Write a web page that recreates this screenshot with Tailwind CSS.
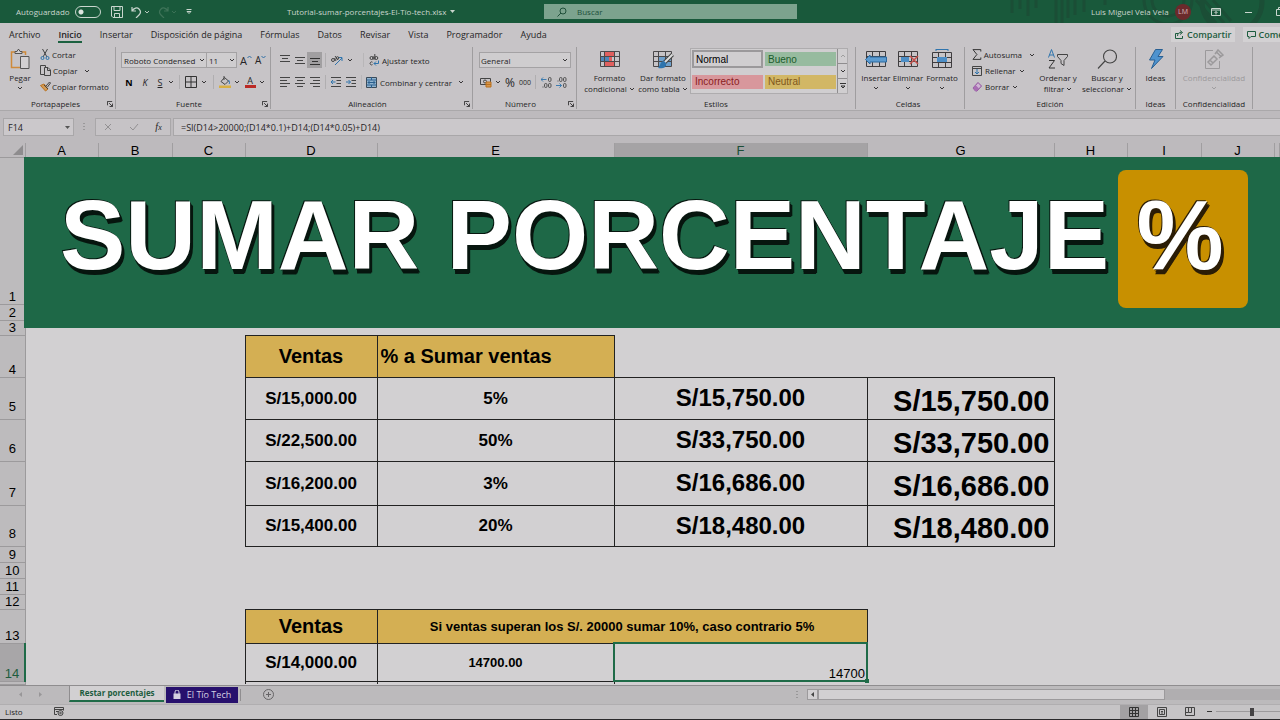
<!DOCTYPE html>
<html lang="es">
<head>
<meta charset="utf-8">
<meta name="viewport" content="width=device-width, initial-scale=1">
<title>Tutorial-sumar-porcentajes-El-Tío-tech.xlsx</title>
<script src="https://cdn.jsdelivr.net/npm/@tailwindcss/browser@4"></script>
</head>
<body class="bg-[#2a292b] font-['Open_Sans','Noto_Sans',sans-serif] text-[8px] leading-[11px] text-[#262426]">
<svg class="hidden" aria-hidden="true">
  <symbol id="chev" viewBox="0 0 6 6"><path d="M1 2l2 2 2-2" fill="none" stroke="currentColor" stroke-width=".9"/></symbol>
  <symbol id="launch" viewBox="0 0 7 7"><path d="M.5 5V.5H6M2.500 2.500L6 6M6.500 3v3.500H3" fill="none" stroke="currentColor"/></symbol>
  <symbol id="cells" viewBox="0 0 22 18"><path d="M1.500 1.500h19v15h-19zM1.500 6.500h19M1.500 11.500h19M7.500 1.500v15M14.500 1.500v15" fill="none" stroke="#3f3d3f"/></symbol>
</svg>
<div class="flex min-h-screen flex-col overflow-hidden">

<!-- Title bar -->
<header class="relative flex h-[23px] shrink-0 items-center overflow-hidden bg-[#19593b] text-[#c9d6ce]">
  <svg class="absolute right-0 top-0 h-[23px] w-[280px]" viewBox="0 0 280 23" fill="none" stroke="#1b4e36" stroke-width="3" aria-hidden="true"><path d="M12 0v13M20 0v9M28 0v16M36 0v8M56 0v23M62 0v23M68 0v18M75 0v15M84 0v12M105 0v5"/><circle cx="168" cy="0" r="24"/><circle cx="168" cy="0" r="16"/><circle cx="232" cy="2" r="30" stroke-width="5"/><path d="M196 0l20 23M204 0l20 23M213 0l18 21"/></svg>
  <div class="relative flex w-[287px] shrink-0 items-center pl-4">
    <label for="auto" class="mr-[5px]">Autoguardado</label>
    <input id="auto" type="checkbox" role="switch" class="h-3 w-[26px] appearance-none rounded-full border border-[#c9d6ce] bg-[radial-gradient(circle_at_5px_5px,#dce5df_2px,transparent_3px)]">
    <button class="ml-[10px]" aria-label="Guardar"><svg class="size-3" viewBox="0 0 12 12" fill="none" stroke="currentColor"><path d="M.5.500h11v11H2L.5 10zM3 .5v4h6v-4M3.500 11.500V7.500h5v4"/></svg></button>
    <button class="ml-2 flex items-center gap-[2px]" aria-label="Deshacer"><svg class="h-3 w-[11px]" viewBox="0 0 11 12" fill="none" stroke="currentColor" stroke-width="1.200"><path d="M1 1v4h4M1 5c2-3 5-4 7-2s2 4 0 6l-3 3"/></svg><svg class="size-[6px]"><use href="#chev"/></svg></button>
    <button class="ml-2 flex items-center gap-[2px] text-[#3f7459]" aria-label="Rehacer" disabled><svg class="h-3 w-[11px]" viewBox="0 0 11 12" fill="none" stroke="currentColor" stroke-width="1.200"><path d="M10 1v4H6M10 5C8 2 5 1 3 3s-2 4 0 6l3 3"/></svg><svg class="size-[6px]"><use href="#chev"/></svg></button>
    <button class="ml-[9px]" aria-label="Personalizar"><svg class="size-[6px]" viewBox="0 0 6 6" fill="none" stroke="currentColor"><path d="M.5.500h5M1 2.500h4L3 4.500z"/></svg></button>
  </div>
  <button class="relative flex w-[257px] shrink-0 items-center gap-1 whitespace-nowrap">Tutorial-sumar-porcentajes-El-Tío-tech.xlsx<svg class="size-[5px]" viewBox="0 0 5 5"><path d="M0 1h5L2.500 4z" fill="currentColor"/></svg></button>
  <label class="relative flex h-[15px] w-[253px] items-center gap-[10px] bg-[#7ca38e] pl-[13px] text-[#20503a]">
    <svg class="size-[10px]" viewBox="0 0 10 10" fill="none" stroke="currentColor"><circle cx="6" cy="4" r="3"/><path d="M4 6L.5 9.500"/></svg>
    <input type="search" aria-label="Buscar" placeholder="Buscar" class="w-40 bg-transparent outline-none placeholder:text-[#20503a]">
  </label>
  <div class="relative ml-auto flex w-[189px] shrink-0 items-center overflow-hidden whitespace-nowrap">
    <span class="w-[84px] shrink-0">Luis Miguel Vela Vela</span>
    <button class="size-4 shrink-0 rounded-full bg-[#6b2a2c] text-[7px] leading-4 text-[#d9b9b9]">LM</button>
    <button class="ml-5 shrink-0" aria-label="Opciones de la cinta"><svg class="h-2 w-[10px]" viewBox="0 0 10 8" fill="none" stroke="currentColor"><path d="M.5.500h9v7h-9zM.5 2h9M5 6.500V3.500M3.500 5L5 3.500 6.500 5"/></svg></button>
    <button class="ml-6 shrink-0" aria-label="Minimizar"><svg class="h-2 w-[7px]" viewBox="0 0 7 8"><path d="M0 4.500h7" stroke="currentColor"/></svg></button>
    <button class="ml-6 shrink-0" aria-label="Restaurar"><svg class="size-[9px]" viewBox="0 0 9 9" fill="none" stroke="currentColor"><path d="M.5 2.500h6v6h-6zM2.500 2V.5h6v6H7"/></svg></button>
  </div>
</header>

<!-- Ribbon tabs -->
<nav class="flex h-[22px] shrink-0 items-center overflow-hidden bg-[#c7c4c7] text-[9px]">
  <div class="flex gap-[18px] whitespace-nowrap pl-[9px]">
    <a href="#">Archivo</a>
    <a href="#" class="-mb-[3px] border-b-2 border-[#1c6140] pb-px font-semibold">Inicio</a>
    <a href="#">Insertar</a><a href="#">Disposición de página</a><a href="#">Fórmulas</a><a href="#">Datos</a><a href="#">Revisar</a><a href="#">Vista</a><a href="#">Programador</a><a href="#">Ayuda</a>
  </div>
  <div class="ml-auto flex w-[109px] shrink-0 gap-2 overflow-hidden whitespace-nowrap font-semibold text-[#1d5c3e]">
    <button class="flex h-[15px] shrink-0 items-center gap-[3px] bg-[#d3d1d3] px-1"><svg class="size-[9px]" viewBox="0 0 9 9" fill="none" stroke="currentColor"><path d="M3 3.500H.5v5h7V6M2.500 6c0-3 2-3.500 4-3.500M5 .5l2.500 2L5 4.500"/></svg>Compartir</button>
    <button class="flex h-[15px] shrink-0 items-center gap-[2px] bg-[#d3d1d3] px-1"><svg class="size-[9px]" viewBox="0 0 9 9" fill="none" stroke="currentColor"><path d="M.5 1.500h8v5H4l-2 2v-2H.5z"/></svg>Comentarios</button>
  </div>
</nav>

<!-- Ribbon -->
<section class="flex h-[66px] shrink-0 overflow-hidden whitespace-nowrap border-b border-[#aaa8aa] bg-[#c7c4c7] *:mt-[2px] *:flex *:h-[62px] *:shrink-0 *:flex-col *:justify-between *:border-r *:border-[#9f9d9f]" aria-label="Inicio">
  <div class="w-[116px]">
    <div class="flex">
      <button class="flex w-10 flex-col items-center pt-[2px]"><svg class="h-5 w-[22px]" viewBox="0 0 22 20" fill="none"><path d="M6 3H2.500v15.500H11M13 3h3.500v3" stroke="#cf8a3a" stroke-width="1.500"/><path d="M6 4.500V2.500h2l1-2h1l1 2h2v2zM11.500 7.500h8.500v12h-8.500z" fill="#d3d1d3" stroke="#555"/></svg><span class="mt-[3px]">Pegar</span><svg class="mt-[2px] size-[6px]"><use href="#chev"/></svg></button>
      <div class="flex flex-col gap-[5px] pt-[2px]">
        <button class="flex items-center gap-[2px]"><svg class="h-[11px] w-[10px]" viewBox="0 0 10 11" fill="none" stroke="#444"><path d="M2.500 0L7 8M7.500 0L3 8"/><circle cx="2.500" cy="9" r="1.500" stroke="#2f74ad"/><circle cx="7.500" cy="9" r="1.500" stroke="#2f74ad"/></svg>Cortar</button>
        <button class="flex items-center gap-[2px]"><svg class="h-[11px] w-[11px]" viewBox="0 0 11 11" fill="none" stroke="#444"><path d="M4 9.500H.5v-9h5V2M4.500 2.500h3.500l2.500 2.500v5.500h-6zM7.500 3v2.500h3"/></svg>Copiar<svg class="ml-[5px] size-[6px]"><use href="#chev"/></svg></button>
        <button class="flex items-center gap-px"><svg class="h-[11px] w-[11px]" viewBox="0 0 11 11" fill="none"><path d="M.5 4.500l5 5.500 2.500-2-4-5z" fill="#d69a50" stroke="#b87324"/><path d="M4 4l4 4M6 5L9.500 1l1 1-3 4" stroke="#444"/></svg>Copiar formato</button>
      </div>
    </div>
    <div class="flex items-center pr-[2px]"><span class="flex-1 pr-3 text-center pl-4">Portapapeles</span><button aria-label="Más opciones de Portapapeles"><svg class="size-[6px]"><use href="#launch"/></svg></button></div>
  </div>

  <div class="w-[155px]">
    <div class="flex flex-col gap-[6px] pl-[5px] pt-[5px]">
      <div class="flex items-center">
        <label class="relative flex items-center"><select aria-label="Fuente" class="h-4 w-[86px] appearance-none border border-[#a4a2a4] bg-[#cfcdcf] pl-[2px] leading-[13px]"><option>Roboto Condensed</option></select><svg class="pointer-events-none absolute right-[2px] size-[6px]"><use href="#chev"/></svg></label>
        <label class="relative -ml-px flex items-center"><select aria-label="Tamaño" class="h-4 w-[31px] appearance-none border border-[#a4a2a4] bg-[#cfcdcf] pl-[2px] leading-[13px]"><option>11</option></select><svg class="pointer-events-none absolute right-[2px] size-[6px]"><use href="#chev"/></svg></label>
        <button class="ml-[3px] flex text-[11px]" aria-label="Aumentar tamaño">A<svg class="size-[5px]" viewBox="0 0 5 5"><path d="M.5 3l2-2 2 2" fill="none" stroke="#2f6fa5"/></svg></button>
        <button class="ml-[3px] flex text-[10px]" aria-label="Reducir tamaño">A<svg class="size-[5px]" viewBox="0 0 5 5"><path d="M.5 1l2 2 2-2" fill="none" stroke="#2f6fa5"/></svg></button>
      </div>
      <div class="flex h-4 items-center text-[9px]">
        <button class="w-4 font-bold text-black">N</button><button class="w-4 italic">K</button><button class="w-[14px] underline">S</button><svg class="ml-[1px] size-[6px]"><use href="#chev"/></svg>
        <span class="ml-[5px] h-[14px] w-px bg-[#b0aeb0]"></span>
        <button class="ml-[5px]" aria-label="Bordes"><svg class="size-3" viewBox="0 0 12 12" fill="none" stroke="#333"><path d="M.5.500h11v11H.5zM6 .5v11M.5 6h11"/></svg></button><svg class="ml-1 size-[6px]"><use href="#chev"/></svg>
        <span class="ml-[6px] h-[14px] w-px bg-[#b0aeb0]"></span>
        <button class="ml-[5px]" aria-label="Color de relleno"><svg class="h-3 w-3" viewBox="0 0 12 12" fill="none"><path d="M2 5.500l3.500-4 4 3.500-3.500 3.500zM5 0v4" stroke="#444"/><path d="M9.500 4c1 1.500 1.500 3 .5 4" stroke="#2f74ad"/><path d="M0 9.500h12V12H0z" fill="#d8b043"/></svg></button><svg class="ml-[3px] size-[6px]"><use href="#chev"/></svg>
        <button class="ml-1 flex w-3 flex-col items-center text-[9px] leading-[9px]" aria-label="Color de fuente">A<span class="h-[3px] w-[11px] bg-[#bb2a25]"></span></button><svg class="ml-[3px] size-[6px]"><use href="#chev"/></svg>
      </div>
    </div>
    <div class="flex items-center pr-[2px]"><span class="flex-1 text-center">Fuente</span><button aria-label="Más opciones de Fuente"><svg class="size-[6px]"><use href="#launch"/></svg></button></div>
  </div>

  <div class="w-[202px]">
    <div class="flex flex-col gap-[6px] pl-[6px] pt-[5px]">
      <div class="flex h-4 items-center">
        <button class="flex w-4 justify-center" aria-label="Alinear arriba"><svg class="size-[10px]" viewBox="0 0 10 10" stroke="#444"><path d="M0 .5h10M2 3.500h6M0 6.500h10"/></svg></button>
        <button class="flex w-[14px] justify-center" aria-label="Alinear en medio"><svg class="size-[10px]" viewBox="0 0 10 10" stroke="#444"><path d="M0 2.500h10M2 5.500h6M0 8.500h10"/></svg></button>
        <button class="flex h-4 w-[15px] items-center justify-center bg-[#a19fa1]" aria-label="Alinear abajo"><svg class="size-[10px]" viewBox="0 0 10 10" stroke="#333"><path d="M0 3.500h10M2 6.500h6M0 9.500h10"/></svg></button>
        <span class="ml-[3px] h-[14px] w-px bg-[#b0aeb0]"></span>
        <button class="ml-[5px] flex items-center gap-[4px]" aria-label="Orientación"><svg class="h-[11px] w-3" viewBox="0 0 12 11" fill="none"><path d="M4 10l7-7M7.500 2.500H11V6" stroke="#2f74ad"/><circle cx="2" cy="5" r="1.500" stroke="#444"/><path d="M3.500 3l1.500 3M4 1l3 4" stroke="#444"/><circle cx="6.500" cy="3" r="1.300" stroke="#444"/></svg><svg class="size-[6px]"><use href="#chev"/></svg></button>
        <span class="ml-[10px] h-[14px] w-px bg-[#b8b6b8]"></span>
        <button class="ml-[5px] flex items-center gap-[3px]"><svg class="h-3 w-[10px]" viewBox="0 0 10 12" fill="none"><g stroke="#333" stroke-width=".9"><circle cx="2.500" cy="4" r="1.500"/><path d="M4.200 2.200v3.500M5.800 0v5.700"/><circle cx="7.300" cy="4" r="1.500"/><path d="M3.500 8.200a1.500 1.500 0 100 2.400"/></g><path d="M9.500 6.500v3H5M7 7.500l-2 2 2 2" stroke="#2f74ad"/></svg>Ajustar texto</button>
      </div>
      <div class="flex h-4 items-center">
        <button class="flex w-4 justify-center" aria-label="Alinear a la izquierda"><svg class="size-[10px]" viewBox="0 0 10 10" stroke="#444"><path d="M0 .5h10M0 3.500h7M0 6.500h10M0 9.500h7"/></svg></button>
        <button class="flex w-[14px] justify-center" aria-label="Centrar"><svg class="size-[10px]" viewBox="0 0 10 10" stroke="#444"><path d="M0 .5h10M2 3.500h6M0 6.500h10M2 9.500h6"/></svg></button>
        <button class="flex w-[15px] justify-center" aria-label="Alinear a la derecha"><svg class="size-[10px]" viewBox="0 0 10 10" stroke="#444"><path d="M0 .5h10M3 3.500h7M0 6.500h10M3 9.500h7"/></svg></button>
        <span class="ml-[3px] h-[14px] w-px bg-[#b0aeb0]"></span>
        <button class="ml-[5px]" aria-label="Disminuir sangría"><svg class="size-[10px]" viewBox="0 0 10 10" fill="none" stroke="#444"><path d="M0 .5h10M5.500 3.500H10M5.500 6.500H10M0 9.500h10"/><path d="M4.500 5H0M2 3L0 5l2 2" stroke="#2f74ad"/></svg></button>
        <button class="ml-[5px]" aria-label="Aumentar sangría"><svg class="size-[10px]" viewBox="0 0 10 10" fill="none" stroke="#444"><path d="M0 .5h10M5.500 3.500H10M5.500 6.500H10M0 9.500h10"/><path d="M0 5h4.500M2.500 3l2 2-2 2" stroke="#2f74ad"/></svg></button>
        <span class="ml-[5px] h-[14px] w-px bg-[#b8b6b8]"></span>
        <button class="ml-[4px] flex items-center gap-[3px]"><svg class="h-[11px] w-[11px]" viewBox="0 0 11 11" fill="none"><path d="M.5.500h10v10H.5z" fill="#90b4d0" stroke="#3b4a58"/><path d="M.5 3h10M.5 8h10M5.500 0v3M5.500 8v3M2 5.500h7M3.500 4L2 5.500 3.500 7M7.500 4L9 5.500 7.500 7" stroke="#2a5f8e"/></svg>Combinar y centrar</button><svg class="ml-[6px] size-[6px]"><use href="#chev"/></svg>
      </div>
    </div>
    <div class="flex items-center pr-[2px]"><span class="flex-1 text-center">Alineación</span><button aria-label="Más opciones de Alineación"><svg class="size-[6px]"><use href="#launch"/></svg></button></div>
  </div>

  <div class="w-[104px]">
    <div class="flex flex-col gap-[6px] pl-[6px] pt-[5px]">
      <label class="relative flex items-center"><select aria-label="Formato de número" class="h-4 w-[92px] appearance-none border border-[#a4a2a4] bg-[#cfcdcf] pl-[1px] leading-[13px]"><option>General</option></select><svg class="pointer-events-none absolute right-[8px] size-[6px]"><use href="#chev"/></svg></label>
      <div class="flex h-4 items-center">
        <button class="ml-px" aria-label="Formato contabilidad"><svg class="h-[11px] w-3" viewBox="0 0 12 11" fill="none"><path d="M.5 1.500h10v6H.5z" stroke="#444"/><circle cx="5" cy="4.500" r="1.500" stroke="#444"/><path d="M6 5h5v5H6zM6 7.500h5" fill="#d8964a" stroke="#b9701f"/></svg></button><svg class="ml-[3px] size-[6px]"><use href="#chev"/></svg>
        <button class="ml-1 text-[12px]">%</button><button class="ml-1 text-[7px]">000</button>
        <span class="ml-[4px] h-[14px] w-px bg-[#b0aeb0]"></span>
        <button class="ml-[5px]" aria-label="Aumentar decimales"><svg class="size-[11px]" viewBox="0 0 11 11" fill="none" stroke="#444" stroke-width=".9"><rect x="7.500" y=".5" width="2.500" height="4" rx="1.200"/><rect x="3.500" y="6.500" width="2.500" height="4" rx="1.200"/><rect x="7.500" y="6.500" width="2.500" height="4" rx="1.200"/><path d="M1.500 10h1"/><path d="M5.500 2.500H0M2 .5L0 2.500l2 2" stroke="#2f74ad"/></svg></button>
        <button class="ml-[4px]" aria-label="Disminuir decimales"><svg class="size-[11px]" viewBox="0 0 11 11" fill="none" stroke="#444" stroke-width=".9"><rect x="3.500" y=".5" width="2.500" height="4" rx="1.200"/><rect x="7.500" y=".5" width="2.500" height="4" rx="1.200"/><rect x="7.500" y="6.500" width="2.500" height="4" rx="1.200"/><path d="M1.500 4h1"/><path d="M0 8.500h5.500M3.500 6.500l2 2-2 2" stroke="#2f74ad"/></svg></button>
      </div>
    </div>
    <div class="flex items-center pr-[2px]"><span class="flex-1 text-center">Número</span><button aria-label="Más opciones de Número"><svg class="size-[6px]"><use href="#launch"/></svg></button></div>
  </div>

  <div class="w-[279px]">
    <div class="flex">
      <button class="ml-[6px] flex w-[53px] flex-col items-center pt-[2px]"><svg class="h-5 w-5" viewBox="0 0 20 20" fill="none"><path d="M5 2h9v5H5z" fill="#e0605f"/><path d="M5 12h9v5H5z" fill="#e0605f"/><path d="M1 7h8v5H1z" fill="#4d86b8"/><path d="M9 7h3v5H9z" fill="#e0605f"/><path d="M.5 2.500h19v15H.5zM.5 7.500h19M.5 12.500h19M4.500 2.500v15M14.500 2.500v15" stroke="#4b494b"/></svg><span class="mt-[3px]">Formato</span><span class="flex items-center gap-[2px]">condicional<svg class="size-[6px]"><use href="#chev"/></svg></span></button>
      <button class="flex w-[54px] flex-col items-center pt-[2px]"><svg class="h-5 w-[22px]" viewBox="0 0 22 20" fill="none"><path d="M6 7h13v10H6z" fill="#6fa0cb"/><path d="M1.500 2.500h18v15h-18zM1.500 7.500h18M1.500 12.500h18M6.500 2.500v15M13.500 2.500v15" stroke="#4b494b"/><path d="M20.500 5.500L12 14" stroke="#444" stroke-width="4"/><path d="M20.500 5.500L12 14" stroke="#ddd" stroke-width="2"/><path d="M12 12c-4 0-3 4-6 7 4 1 9 0 8-5z" fill="#2f74ad"/></svg><span class="mt-[3px]">Dar formato</span><span class="flex items-center gap-[2px]">como tabla<svg class="size-[6px]"><use href="#chev"/></svg></span></button>
      <div class="mt-[1px] flex border border-[#aeacae] bg-[#d0ced0] font-['Liberation_Sans',sans-serif] text-[10px]">
        <div class="grid grid-cols-2 gap-x-[2px] gap-y-[3px] p-px *:h-[18px] *:w-[71px] *:pl-[3px] *:text-left">
          <button class="border-2 border-[#9b999b] pl-[2px]! text-black">Normal</button>
          <button class="border-y-2 border-[#d0ced0] bg-[#97bb9f] text-[#1b5c2c]">Bueno</button>
          <button class="border-y-2 border-[#d0ced0] bg-[#d8979c] text-[#8b1c22]">Incorrecto</button>
          <button class="border-y-2 border-[#d0ced0] bg-[#d2b765] text-[#80561a]">Neutral</button>
        </div>
        <div class="flex w-[10px] flex-col divide-y divide-[#8f8d8f] border-l border-[#8f8d8f] *:flex *:flex-1 *:items-center *:justify-center">
          <button aria-label="Anterior" class="text-[#999]"><svg class="size-[6px] rotate-180"><use href="#chev"/></svg></button>
          <button aria-label="Siguiente"><svg class="size-[6px]"><use href="#chev"/></svg></button>
          <button aria-label="Más estilos"><svg class="size-[6px]" viewBox="0 0 6 6" fill="none" stroke="#333"><path d="M0 .5h6M1 3l2 2 2-2z"/></svg></button>
        </div>
      </div>
    </div>
    <span class="text-center">Estilos</span>
  </div>

  <div class="w-[109px]">
    <div class="flex pl-[4px] *:flex *:flex-col *:items-center *:pt-[2px]">
      <button class="w-8"><svg class="h-5 w-[22px]" viewBox="0 0 22 20"><use href="#cells" y="1" width="22" height="18"/><path d="M5 8h16.500v5H5v2L.5 10.500 5 6z" fill="#5c9bd0" stroke="#2a689f"/></svg><span class="mt-[3px]">Insertar</span><svg class="mt-[2px] size-[6px]"><use href="#chev"/></svg></button>
      <button class="w-8"><svg class="h-5 w-[22px]" viewBox="0 0 22 20"><use href="#cells" y="1" width="22" height="18"/><path d="M4 8h8v5H4z" fill="#4d8ec6"/><path d="M13 7l8 8M21 7l-8 8" stroke="#c8504b" stroke-width="1.500"/></svg><span class="mt-[3px]">Eliminar</span><svg class="mt-[2px] size-[6px]"><use href="#chev"/></svg></button>
      <button class="w-[36px]"><svg class="h-5 w-[22px]" viewBox="0 0 22 20"><use href="#cells" y="2" width="22" height="18"/><path d="M6 8h10v5H6z" fill="#4d8ec6"/><path d="M5 .5h12M5 0v2M17 0v2" stroke="#2f74ad"/></svg><span class="mt-[3px]">Formato</span><svg class="mt-[2px] size-[6px]"><use href="#chev"/></svg></button>
    </div>
    <span class="pr-1 text-center">Celdas</span>
  </div>

  <div class="w-[171px]">
    <div class="flex">
      <div class="flex w-[70px] flex-col gap-[5px] pl-[7px] pt-[2px]">
        <button class="flex items-center gap-[2px]"><svg class="h-[11px] w-[10px]" viewBox="0 0 10 11" fill="none" stroke="#333"><path d="M9 2.500V.5H1l4 5-4 5h8v-2"/></svg>Autosuma<svg class="ml-[5px] size-[6px] shrink-0"><use href="#chev"/></svg></button>
        <button class="flex items-center gap-[3px]"><svg class="h-[10px] w-[10px]" viewBox="0 0 10 10" fill="none"><path d="M.5.500h9v9h-9zM.5 2.500h9" stroke="#444"/><path d="M5 3v5M3 6l2 2 2-2" stroke="#2f74ad"/></svg>Rellenar<svg class="size-[6px]"><use href="#chev"/></svg></button>
        <button class="flex items-center gap-[3px]"><svg class="h-[10px] w-[10px]" viewBox="0 0 10 10"><path d="M1 6l5-5.500 3.500 3.500L5 9H3.500z" fill="#d0b6d5" stroke="#8e4a9b"/><path d="M1 6l2.500-3L7 6.500 5 9H3.500z" fill="#a86fb3"/></svg>Borrar<svg class="size-[6px]"><use href="#chev"/></svg></button>
      </div>
      <button class="flex w-[46px] flex-col items-center pt-[2px]"><svg class="h-5 w-5" viewBox="0 0 20 20" fill="none"><path d="M.5 8.500L3.500.5l3 8M1.500 6h4" stroke="#2f74ad"/><path d="M1 11.500h5.500L1 19h6" stroke="#333"/><path d="M9.500 5.500h10v2L16 11.500v5l-3-2v-3L9.500 7.500z" stroke="#444"/></svg><span class="mt-[3px]">Ordenar y</span><span class="flex items-center gap-[2px]">filtrar<svg class="size-[6px]"><use href="#chev"/></svg></span></button>
      <button class="flex w-[52px] flex-col items-center pt-[2px]"><svg class="h-5 w-5" viewBox="0 0 20 20" fill="none" stroke="#444" stroke-width="1.100"><circle cx="13" cy="7.500" r="6.500"/><path d="M8 12l-7 7.500"/></svg><span class="mt-[3px]">Buscar y</span><span class="flex items-center gap-[2px]">seleccionar<svg class="size-[6px]"><use href="#chev"/></svg></span></button>
    </div>
    <span class="text-center">Edición</span>
  </div>

  <div class="w-10">
    <button class="flex flex-col items-center pt-[2px]"><svg class="h-5 w-4" viewBox="0 0 16 20"><path d="M7.500.500h7L10 7.500h5L3.500 19.500 7 11H1.500z" fill="#4f93cf" stroke="#285f92"/></svg><span class="mt-[3px]">Ideas</span></button>
    <span class="text-center">Ideas</span>
  </div>

  <div class="w-[77px]">
    <button disabled class="flex flex-col items-center pt-[2px] text-[#9b999b]"><svg class="h-5 w-5" viewBox="0 0 20 20" fill="none" stroke="currentColor"><path d="M9 1.500H1.500v18h14V12"/><path d="M4 13l6-6 3 3-6 6zM11 5l3-4 5 5-4 3M12 2.500l5 5M6 11l3 3" stroke-width="1.500"/></svg><span class="mt-[3px]">Confidencialidad</span><svg class="mt-[2px] size-[6px]"><use href="#chev"/></svg></button>
    <span class="text-center">Confidencialidad</span>
  </div>
</section>

<!-- Formula bar -->
<div class="flex h-8 shrink-0 items-center bg-[#bdbabd] pl-[3px]">
  <label class="relative flex items-center"><input aria-label="Cuadro de nombres" value="F14" class="h-[18px] w-[71px] border border-[#a9a7a9] bg-[#cbc8cb] pl-1 text-[9px]"><svg class="absolute right-[4px] size-[5px]" viewBox="0 0 5 5"><path d="M0 1h5L2.500 4z" fill="#555"/></svg></label>
  <svg class="ml-2 h-2 w-1" viewBox="0 0 4 8"><path d="M2 0v8" stroke="#777" stroke-dasharray="1 2"/></svg>
  <div class="ml-[9px] flex h-[18px] w-[76px] shrink-0 items-center justify-around border border-[#a9a7a9] bg-[#c6c3c6] text-[#929092]">
    <button aria-label="Cancelar"><svg class="size-[8px]" viewBox="0 0 8 8"><path d="M1 1l6 6M7 1L1 7" stroke="currentColor"/></svg></button>
    <button aria-label="Introducir"><svg class="h-2 w-[10px]" viewBox="0 0 10 8"><path d="M1 4l3 3 5-6" fill="none" stroke="currentColor"/></svg></button>
    <button class="font-['Liberation_Serif',serif] text-[10px] italic text-[#222]">f<span class="text-[8px]">x</span></button>
  </div>
  <input aria-label="Barra de fórmulas" value="=SI(D14>20000;(D14*0.1)+D14;(D14*0.05)+D14)" class="ml-[2px] h-[18px] min-w-0 flex-1 border border-r-0 border-[#a9a7a9] bg-[#cbc8cb] pl-[7px] text-[9px]">
</div>

<!-- Worksheet -->
<main class="relative flex-1 overflow-hidden bg-[#d2d0d2] font-['Liberation_Sans',Arial,sans-serif] text-black">
  <table class="w-full min-w-[1280px] table-fixed border-collapse text-[17px] leading-none [&_tbody_th]:border-y [&_tbody_th]:border-r [&_tbody_th]:border-[#9c9a9c] [&_tbody_th]:bg-[#bdbbbd] [&_tbody_th]:align-bottom [&_tbody_th]:text-[13px] [&_tbody_th]:font-normal [&_tbody_th]:pb-px [&_td]:p-0 [&_th]:p-0">
    <colgroup><col class="w-[25px]"><col class="w-[73px]"><col class="w-[74px]"><col class="w-[73px]"><col class="w-[132px]"><col class="w-[237px]"><col class="w-[253px]"><col class="w-[187px]"><col class="w-[73px]"><col class="w-[74px]"><col class="w-[73px]"><col></colgroup>
    <thead class="text-[13px] *:h-[14px] *:bg-[#bdbabd] [&_th]:border-r [&_th]:border-[#a09ea0] [&_th]:font-normal">
      <tr><th><svg class="ml-auto mr-[2px] size-[10px]" viewBox="0 0 10 10"><path d="M10 0v10H0z" fill="#8e8c8e"/></svg></th><th scope="col">A</th><th scope="col">B</th><th scope="col">C</th><th scope="col">D</th><th scope="col">E</th><th scope="col" class="bg-[#a5a3a5] text-[#1d4e37]">F</th><th scope="col">G</th><th scope="col">H</th><th scope="col">I</th><th scope="col">J</th><th></th></tr>
    </thead>
    <tbody class="text-center font-bold">
      <tr class="h-[147px]"><th scope="row">1</th><td colspan="11"></td></tr>
      <tr class="h-[16px]"><th scope="row">2</th><td colspan="11"></td></tr>
      <tr class="h-[15px]"><th scope="row">3</th><td colspan="11"></td></tr>
      <tr class="h-[42px] text-[20px]"><th scope="row">4</th><td colspan="3"></td><td class="border border-[#222] bg-[#d4af53]">Ventas</td><td class="border border-[#222] bg-[#d4af53] pl-[3px]! text-left">% a Sumar ventas</td><td colspan="6"></td></tr>
      <tr class="h-[42px]"><th scope="row" class="pb-[6px]!">5</th><td colspan="3"></td><td class="border border-[#222]">S/15,000.00</td><td class="border border-[#222]">5%</td><td class="border border-[#222] text-[24px]">S/15,750.00</td><td class="border border-[#222] pr-1! pt-[6px]! text-right text-[29px]">S/15,750.00</td><td colspan="4"></td></tr>
      <tr class="h-[42px]"><th scope="row" class="pb-[6px]!">6</th><td colspan="3"></td><td class="border border-[#222]">S/22,500.00</td><td class="border border-[#222]">50%</td><td class="border border-[#222] text-[24px]">S/33,750.00</td><td class="border border-[#222] pr-1! pt-[6px]! text-right text-[29px]">S/33,750.00</td><td colspan="4"></td></tr>
      <tr class="h-[44px]"><th scope="row" class="pb-[6px]!">7</th><td colspan="3"></td><td class="border border-[#222]">S/16,200.00</td><td class="border border-[#222]">3%</td><td class="border border-[#222] text-[24px]">S/16,686.00</td><td class="border border-[#222] pr-1! pt-[6px]! text-right text-[29px]">S/16,686.00</td><td colspan="4"></td></tr>
      <tr class="h-[41px]"><th scope="row" class="pb-[6px]!">8</th><td colspan="3"></td><td class="border border-[#222]">S/15,400.00</td><td class="border border-[#222]">20%</td><td class="border border-[#222] text-[24px]">S/18,480.00</td><td class="border border-[#222] pr-1! pt-[6px]! text-right text-[29px]">S/18,480.00</td><td colspan="4"></td></tr>
      <tr class="h-[16px]"><th scope="row">9</th><td colspan="11"></td></tr>
      <tr class="h-[16px]"><th scope="row">10</th><td colspan="11"></td></tr>
      <tr class="h-[16px]"><th scope="row">11</th><td colspan="11"></td></tr>
      <tr class="h-[15px]"><th scope="row">12</th><td colspan="11"></td></tr>
      <tr class="h-[34px] text-[20px]"><th scope="row">13</th><td colspan="3"></td><td class="border border-[#222] bg-[#d4af53]">Ventas</td><td colspan="2" class="border border-[#222] bg-[#d4af53] text-[13px]">Si ventas superan los S/. 20000 sumar 10%, caso contrario 5%</td><td colspan="5"></td></tr>
      <tr class="h-[38px]"><th scope="row" class="border-r-2! border-r-[#1f6b48]! bg-[#a8a6a8]! text-[#1d5c3e]">14</th><td colspan="3"></td><td class="border border-[#222]">S/14,000.00</td><td class="border border-[#222] text-[13px]">14700.00</td><td class="relative pb-px! pr-[2px]! text-right align-bottom text-[13px] font-normal outline-2 -outline-offset-1 outline-[#1f6b48]">14700<span class="absolute -bottom-[2px] -right-[2px] size-[4px] bg-[#1f6b48]"></span></td><td colspan="5"></td></tr>
      <tr class="h-[3px]"><th></th><td colspan="3"></td><td class="border-x border-[#222]"></td><td class="border-x border-[#222]"></td><td colspan="6"></td></tr>
    </tbody>
  </table>
  <!-- Banner laid over the first rows -->
  <div class="absolute left-6 right-0 top-[14px] flex h-[171px] items-start justify-between bg-[#1e6847] pl-9 pr-8 pt-[13px] text-[98px] font-bold leading-[130px] text-white">
    <h1 class="whitespace-nowrap [text-shadow:-1px_-1px_0_#07160f,1px_1px_0_#07160f,2px_3px_0_#07160f,3px_4px_0_#07160f,2px_5px_0_#07160f]">SUMAR PORCENTAJE</h1>
    <span class="h-[138px] w-[130px] rounded-lg bg-[#c89000] pr-[6px] text-center [text-shadow:-1px_-1px_0_#2b1d06,1px_1px_0_#2b1d06,2px_3px_0_#2b1d06,3px_4px_0_#2b1d06,2px_5px_0_#2b1d06]">%</span>
  </div>
</main>

<!-- Sheet tabs -->
<div class="flex h-[19px] shrink-0 items-stretch border-t border-[#8f8d8f] bg-[#bcbabc] text-[9px]">
  <div class="flex w-[69px] shrink-0 items-center gap-[15px] pl-[18px] text-[#989698]"><button aria-label="Hoja anterior"><svg class="size-[5px]" viewBox="0 0 5 5"><path d="M4 0v5L1 2.500z" fill="currentColor"/></svg></button><button aria-label="Hoja siguiente"><svg class="size-[5px]" viewBox="0 0 5 5"><path d="M1 0v5l3-2.500z" fill="currentColor"/></svg></button></div>
  <button class="mb-[2px] w-[95px] whitespace-nowrap border-b-2 border-l border-[#1f6b48] border-l-[#8f8d8f] bg-[#d2d0d2] text-[8px] font-bold text-[#1d5c3e]">Restar porcentajes</button>
  <button class="my-[1px] ml-[2px] flex w-[72px] items-center justify-center gap-[6px] whitespace-nowrap bg-[#27106d] text-[#d5d0e2]"><svg class="h-[9px] w-2" viewBox="0 0 8 9"><path d="M2 4V2a2 2 0 014 0v2" fill="none" stroke="currentColor"/><path d="M.5 3.500h7V9h-7z" fill="currentColor"/></svg>El Tío Tech</button>
  <span class="my-[3px] ml-[2px] w-px bg-[#908e90]"></span>
  <button class="ml-[22px]" aria-label="Hoja nueva"><svg class="size-[11px]" viewBox="0 0 11 11" fill="none" stroke="#666466"><circle cx="5.500" cy="5.500" r="5"/><path d="M5.500 3v5M3 5.500h5"/></svg></button>
  <div class="ml-auto flex w-[485px] items-center">
    <svg class="mr-[8px] h-2 w-1" viewBox="0 0 4 8"><path d="M2 0v8" stroke="#777" stroke-dasharray="1 2"/></svg>
    <button class="flex h-[11px] w-[11px] items-center justify-center border border-[#9c9a9c] bg-[#d2d0d2]" aria-label="Desplazar a la izquierda"><svg class="size-[5px]" viewBox="0 0 5 5"><path d="M4 0v5L1 2.500z" fill="#444"/></svg></button>
    <div class="h-[11px] flex-1 bg-[#b0aeb0]"><div class="h-full w-3/4 border border-[#9c9a9c] bg-[#d2d0d2]"></div></div>
  </div>
</div>

<!-- Status bar -->
<footer class="mb-[2px] flex h-[15px] shrink-0 items-center border-t border-[#b0aeb0] bg-[#c6c4c6] pl-[5px]">
  <span>Listo</span>
  <button class="ml-[31px]" aria-label="Grabar macro"><svg class="h-[9px] w-[10px]" viewBox="0 0 10 9" fill="none" stroke="#444"><path d="M3 7.500H.5v-7h9v3M.5 2.500h9M2 4.500h2"/><circle cx="6.500" cy="6" r="2.500"/><circle cx="6.500" cy="6" r=".8"/></svg></button>
  <div class="ml-auto flex h-full items-center">
    <button class="flex h-full w-7 items-center justify-center bg-[#a3a1a3]" aria-label="Normal"><svg class="size-[10px]" viewBox="0 0 10 10" fill="none" stroke="#333"><path d="M.5.500h9v9h-9zM.5 3.500h9M.5 6.500h9M3.500.500v9M6.500.500v9"/></svg></button>
    <button class="flex w-7 justify-center" aria-label="Diseño de página"><svg class="size-[10px]" viewBox="0 0 10 10" fill="none" stroke="#444"><path d="M.5.500h9v9h-9zM2.500 2.500h5v5h-5zM4 4.500h2M4 6h2"/></svg></button>
    <button class="flex w-7 justify-center" aria-label="Salto de página"><svg class="size-[10px]" viewBox="0 0 10 10" fill="none" stroke="#444"><path d="M.5.500h9v8h-9zM3.500.500v5h3v-5M.5 5.500h3"/></svg></button>
    <button class="ml-[3px] w-[5px]" aria-label="Alejar"><svg class="size-[5px]" viewBox="0 0 5 5"><path d="M0 2.500h5" stroke="#333"/></svg></button>
    <input type="range" aria-label="Zoom" value="57" class="ml-1 h-[9px] w-[64px] appearance-none bg-[linear-gradient(#9c9a9c,#9c9a9c)] bg-[length:100%_1px] bg-center bg-no-repeat [&::-webkit-slider-thumb]:h-2 [&::-webkit-slider-thumb]:w-[4px] [&::-webkit-slider-thumb]:appearance-none [&::-webkit-slider-thumb]:bg-[#444244]">
  </div>
</footer>
</div>
</body>
</html>
